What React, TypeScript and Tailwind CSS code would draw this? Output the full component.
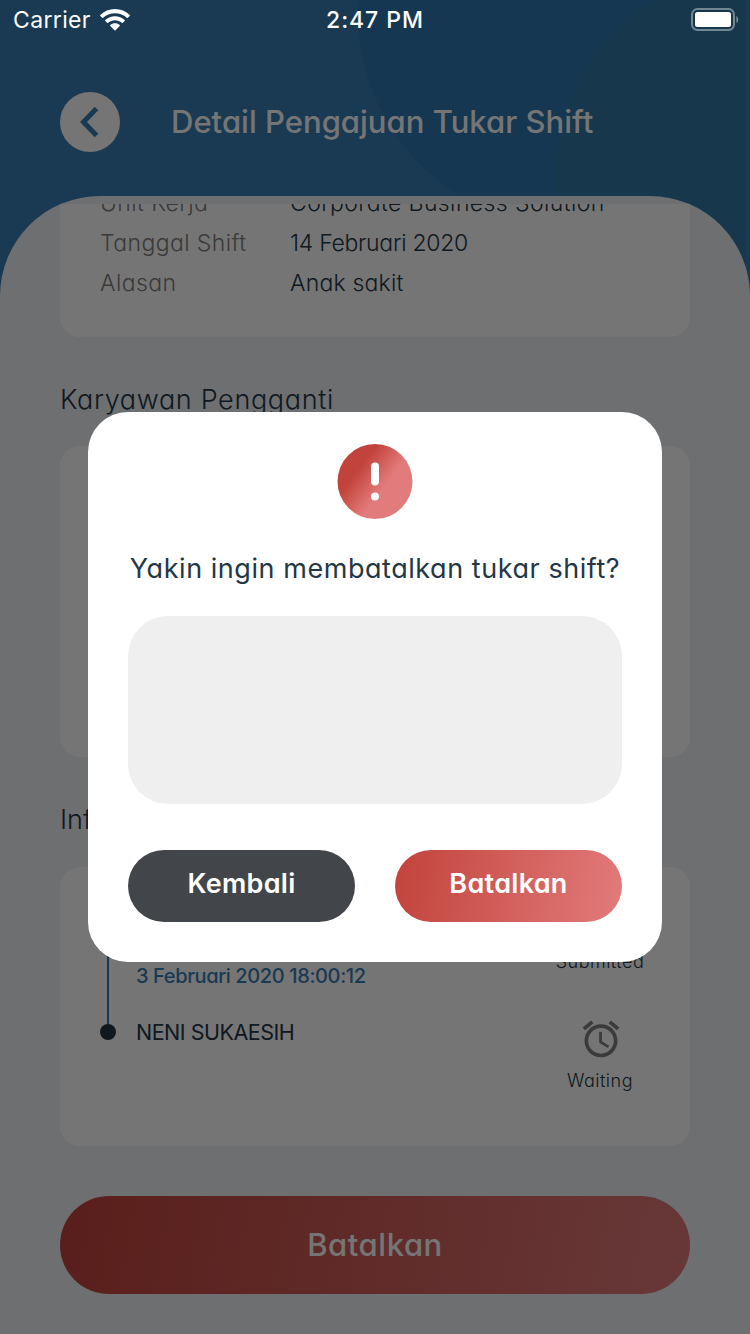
import React from "react";

const redGradient = "bg-linear-[100deg,#c2433b,#e27b7b]";

function StatusBar() {
  return (
    <div className="absolute inset-x-0 top-0 z-20 grid h-10 grid-cols-3 items-center pl-[13px] pr-[11px] text-white [font-feature-settings:normal]">
      <div className="flex h-10 items-center gap-[9px]">
        <span className="pt-px text-[23px] leading-[39px] tracking-[0.35px]">Carrier</span>
        <svg width="30" height="22" viewBox="0 0 30 22" fill="white">
          <path d="M15 0C9.300 0 4.100 2.200.3 5.900c-.3.300-.3.700 0 1l1.900 1.900c.3.300.7.300 1 0C6.300 5.800 10.400 4.200 15 4.200s8.700 1.600 11.800 4.600c.3.300.7.300 1 0l1.900-1.900c.3-.3.300-.7 0-1C25.900 2.200 20.700 0 15 0z" />
          <path d="M15 7.200c-3.700 0-7.100 1.400-9.700 3.700-.3.300-.3.700 0 1l1.900 1.900c.3.300.7.300 1 0 1.800-1.600 4.200-2.500 6.800-2.500s5 .9 6.800 2.500c.3.300.7.300 1 0l1.900-1.900c.3-.3.300-.7 0-1-2.600-2.300-6-3.700-9.700-3.700z" />
          <path d="M15 14.300c-1.800 0-3.400.6-4.700 1.600-.3.300-.3.700 0 1l4.200 4.300c.3.300.7.300 1 0l4.200-4.300c.3-.3.300-.7 0-1-1.300-1-2.900-1.600-4.700-1.600z" />
        </svg>
      </div>
      <span className="pr-0.5 pt-px text-center text-[23px] font-medium leading-[39px] tracking-[0.95px]">2:47 PM</span>
      <svg className="justify-self-end" width="48" height="24" viewBox="0 0 48 24" fill="none">
        <rect x="1" y="1" width="42" height="21" rx="5.500" stroke="white" strokeOpacity=".4" strokeWidth="2" />
        <rect x="4" y="4" width="36" height="15" rx="2.500" fill="white" />
        <path d="M45.500 8v7c2-1 2-6 0-7z" fill="white" fillOpacity=".5" />
      </svg>
    </div>
  );
}

function Header() {
  return (
    <header className="flex h-[104px] items-center px-15">
      <button className="flex size-15 items-center justify-center rounded-full bg-white">
        <svg width="60" height="60" viewBox="0 0 60 60" fill="none">
          <path d="M36.500 16.500 23.500 30 36.500 43.500" stroke="#387eb4" strokeWidth="5" />
        </svg>
      </button>
      <h1 className="ml-[51px] whitespace-nowrap text-[31px] font-medium leading-10 tracking-[0.02px] text-white">
        Detail Pengajuan Tukar Shift
      </h1>
    </header>
  );
}

function InfoRow({ label, value, spacing }: { label: string; value: string; spacing: string }) {
  return (
    <div className="flex h-10 items-center whitespace-nowrap text-[23px] font-light">
      <span className="w-[190px] tracking-[0.4px] text-[#808080]">{label}</span>
      <span className={`text-[#243746] ${spacing}`}>{value}</span>
    </div>
  );
}

function Timeline() {
  return (
    <section className="flex h-[279px] rounded-[20px] bg-white pl-10 pr-[45px]">
      <div className="flex w-9 flex-col">
        <div className="ml-[7px] h-[157px] w-0.5 bg-[#387eb4]" />
        <div className="size-4 rounded-full bg-[#243746]" />
      </div>
      <div className="flex flex-1 flex-col whitespace-nowrap pt-[94px]">
        <span className="text-[20px] font-medium leading-[30px] tracking-[-0.38px] text-[#387eb4]">
          3 Februari 2020 18:00:12
        </span>
        <span className="mt-[26px] text-[21.5px] leading-[30px] tracking-[-0.5px] text-[#243746]">NENI SUKAESIH</span>
      </div>
      <div className="flex w-[90px] flex-col items-center pt-[83px] text-[18px] font-light leading-6 tracking-[0.5px] text-[#243746]">
        <span>Submitted</span>
        <svg className="ml-px mt-[43px]" width="44" height="44" viewBox="0 0 24 24" fill="#808080">
          <path d="M22 5.720l-4.600-3.860-1.290 1.530 4.600 3.860L22 5.720zM7.880 3.390L6.600 1.860 2 5.710l1.290 1.530 4.590-3.850zM12.500 8H11v6l4.750 2.850.75-1.230-4-2.370V8zM12 4c-4.970 0-9 4.030-9 9s4.020 9 9 9c4.970 0 9-4.030 9-9s-4.030-9-9-9zm0 16c-3.870 0-7-3.130-7-7s3.130-7 7-7 7 3.130 7 7-3.130 7-7 7z" />
        </svg>
        <span className="mt-2">Waiting</span>
      </div>
    </section>
  );
}

function Dialog() {
  return (
    <div role="dialog" className="flex h-[550px] w-[574px] flex-col items-center rounded-[40px] bg-white px-10 pt-8">
      <svg width="76" height="76" viewBox="0 0 76 76">
        <defs>
          <linearGradient id="alert" x1="22" y1="24" x2="47" y2="43" gradientUnits="userSpaceOnUse">
            <stop stopColor="#c2433b" />
            <stop offset="1" stopColor="#e27b7b" />
          </linearGradient>
        </defs>
        <circle cx="38" cy="37.500" r="37.500" fill="url(#alert)" />
        <rect x="34" y="18.500" width="8" height="23" rx="4" fill="white" />
        <circle cx="38" cy="52.500" r="4" fill="white" />
      </svg>
      <h2 className="mt-[29px] whitespace-nowrap text-[27px] leading-10 tracking-[0.55px] text-[#243746]">
        Yakin ingin membatalkan tukar shift?
      </h2>
      <textarea className="mt-[27px] h-[188px] w-full shrink-0 resize-none rounded-[40px] bg-[#efefef]" />
      <div className="mt-[46px] flex w-full gap-10 text-[27px] font-semibold tracking-[0.3px] text-white">
        <button className="h-[72px] flex-1 rounded-full bg-[#424549] pb-1">Kembali</button>
        <button className={`h-[72px] flex-1 rounded-full pb-1 ${redGradient}`}>Batalkan</button>
      </div>
    </div>
  );
}

export default function App() {
  return (
    <div className="relative h-[1334px] w-[750px] overflow-hidden bg-[#387eb4] font-['Inter','Liberation_Sans',sans-serif] [font-feature-settings:'cv11']">
      <svg className="absolute left-0 top-0" width="745" height="300" viewBox="0 0 745 300">
        <circle cx="573" cy="13" r="215" fill="#2f79b0" />
        <circle cx="772" cy="182" r="217" fill="#3179a6" />
      </svg>
      <div className="relative flex h-full flex-col pt-[70px]">
        <Header />
        <main className="mt-[22px] flex flex-1 flex-col overflow-hidden rounded-t-[100px] bg-[#edf1f5] px-15">
          <div className="mt-2 h-[133px] shrink-0 overflow-hidden">
            <section className="-mt-[21px] h-[154px] rounded-b-[20px] bg-white px-10">
              <InfoRow label="Unit Kerja" value="Corporate Business Solution" spacing="tracking-[0.4px]" />
              <InfoRow label="Tanggal Shift" value="14 Februari 2020" spacing="tracking-[-0.28px]" />
              <InfoRow label="Alasan" value="Anak sakit" spacing="tracking-[0.2px]" />
            </section>
          </div>
          <h2 className="mt-[43px] h-10 text-[27px] font-light leading-10 tracking-[0.65px] text-[#243746]">Karyawan Pengganti</h2>
          <section className="mt-[26px] h-[311px] shrink-0 rounded-[20px] bg-white" />
          <h2 className="mb-[27px] mt-[43px] h-10 text-[27px] font-light leading-10 text-[#243746]">Informasi</h2>
          <Timeline />
          <button
            className={`mt-[50px] h-[98px] shrink-0 rounded-full text-[31px] font-medium tracking-[0.55px] text-white ${redGradient}`}
          >
            Batalkan
          </button>
        </main>
      </div>
      <div className="absolute inset-0 z-10 flex justify-center bg-black/54 pt-[412px]">
        <Dialog />
      </div>
      <StatusBar />
    </div>
  );
}
